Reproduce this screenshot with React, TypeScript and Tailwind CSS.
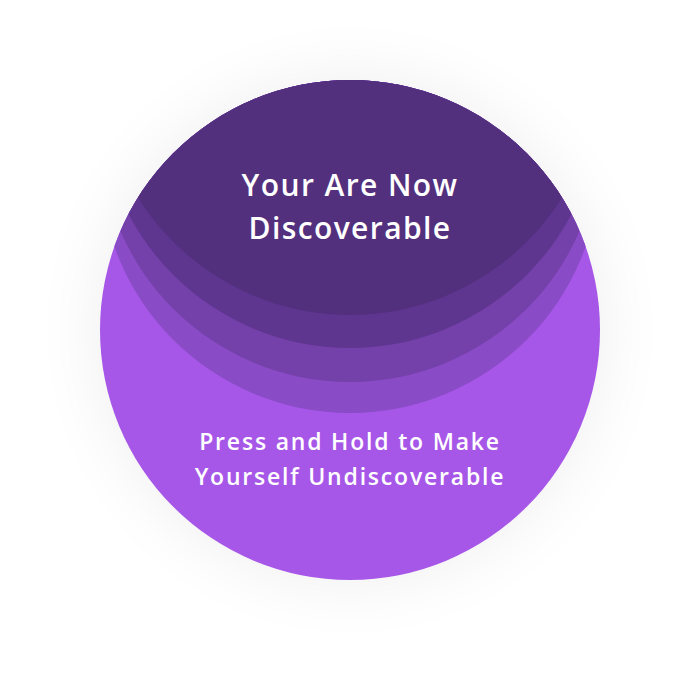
export default function App() {
  return (
    <div className="w-[700px] h-[700px] bg-white flex items-center justify-center font-['Open_Sans','Liberation_Sans',sans-serif]">
      <div className="relative w-[500px] h-[500px] -mt-[40px] rounded-full overflow-hidden bg-[#a757e8] shadow-[0_0_70px_rgba(0,0,0,0.07)]">
        {/* ripple layers, lightest first */}
        <div className="absolute left-0 top-[-167px] w-[500px] h-[500px] rounded-full bg-[#8a4bc6]" />
        <div className="absolute left-0 top-[-198px] w-[500px] h-[500px] rounded-full bg-[#7440a9]" />
        <div className="absolute left-0 top-[-232px] w-[500px] h-[500px] rounded-full bg-[#5e358f]" />
        <div className="absolute left-0 top-[-265px] w-[500px] h-[500px] rounded-full bg-[#52307e]" />

        <div className="relative flex flex-col items-center h-full text-white text-center">
          <p className="mt-[83px] text-[30px] leading-[43px] font-semibold tracking-[1.4px]">
            Your Are Now
            <br />
            Discoverable
          </p>
          <p className="mt-[175px] text-[23px] leading-[35px] font-semibold tracking-[1.8px]">
            Press and Hold to Make
            <br />
            Yourself Undiscoverable
          </p>
        </div>
      </div>
    </div>
  );
}
